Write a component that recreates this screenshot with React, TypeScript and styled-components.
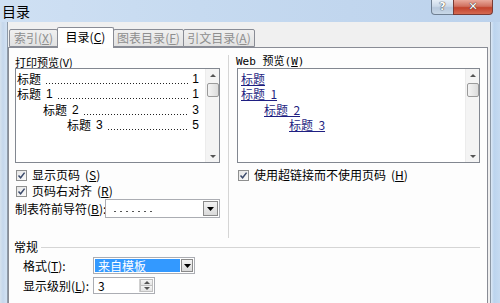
import React from 'react';
import styled, { createGlobalStyle } from 'styled-components';

const GlobalStyle = createGlobalStyle`
  html, body { margin: 0; padding: 0; }
  body {
    width: 500px; height: 303px; overflow: hidden;
    font-family: "Noto Sans CJK SC", "Liberation Sans", sans-serif;
    font-size: 12px; color: #000;
  }
  * { box-sizing: border-box; }
`;

const Window = styled.div`
  width: 500px; height: 303px;
  display: flex; flex-direction: column;
  background: #c8daee; overflow: hidden;
`;

const TitleBar = styled.div`
  height: 22px; flex: none;
  display: flex; justify-content: space-between; align-items: flex-start;
  background: linear-gradient(90deg, #cfe0f3 0%, #c6daf0 40%, #bcd2ec 100%);
`;

const Title = styled.div`
  padding: 3px 0 0 2px;
  font-size: 14px; line-height: 16px;
`;

const CapButtons = styled.div`
  display: flex; margin-right: 7px;
`;

const CapButton = styled.div<{ $close?: boolean }>`
  width: ${p => (p.$close ? 40 : 23)}px; height: 15px;
  border: 1px solid ${p => (p.$close ? '#7a3b35' : '#6f7f92')};
  border-top: none;
  border-radius: ${p => (p.$close ? '0 0 4px 0' : '0 0 0 4px')};
  margin-left: ${p => (p.$close ? -1 : 0)}px;
  background: ${p => (p.$close
    ? 'linear-gradient(180deg, #e9a99c 0%, #d0705f 45%, #c2422c 55%, #d56a52 100%)'
    : 'linear-gradient(180deg, #e6eef7 0%, #cbd9e8 45%, #b7c8dc 55%, #c9d8e8 100%)')};
  display: flex; align-items: center; justify-content: center;
  color: #fff; font-family: "DejaVu Sans", sans-serif; font-weight: bold;
  font-size: 11px; line-height: 12px;
  text-shadow: 0 0 1px #333, 0 0 1px #333;
`;

const Body = styled.div`
  flex: 1; display: flex; min-height: 0;
`;

const LeftFrame = styled.div`
  width: 8px; flex: none;
  background: linear-gradient(90deg, #d6e2ee 0px, #c5d7ec 3px, #d0e0f2 6px);
  border-right: 1px solid #8e9aa8;
`;

const RightFrame = styled.div`
  width: 10px; flex: none;
  border-left: 1px solid #8d98a5;
  background: linear-gradient(90deg, #dce8f5 0px, #bcd4ee 3px, #c7dbf1 10px);
`;

const Client = styled.div`
  flex: 1; display: flex; flex-direction: column;
  background: #f0f0f0;
  padding: 5px 2px 0 0;
`;

const TabStrip = styled.div`
  height: 20px; flex: none;
  display: flex; align-items: flex-end;
  padding-left: 1px;
  position: relative; z-index: 1;
`;

const Tab = styled.div<{ $active?: boolean; $w: number }>`
  width: ${p => p.$w}px;
  height: ${p => (p.$active ? 21 : 18)}px;
  margin-bottom: ${p => (p.$active ? -1 : 0)}px;
  margin-left: -1px;
  border: 1px solid #898c95;
  border-bottom: ${p => (p.$active ? 'none' : '1px solid #898c95')};
  border-radius: 2px 2px 0 0;
  background: ${p => (p.$active ? '#ffffff' : 'linear-gradient(180deg, #f0f0f0 0%, #e2e2e2 100%)')};
  color: ${p => (p.$active ? '#000' : '#8e8e8e')};
  display: flex; align-items: center; justify-content: center;
  font-size: 12px; line-height: 14px;
  padding-bottom: ${p => (p.$active ? 2 : 0)}px;
  white-space: nowrap;
  &:first-child { margin-left: 0; }
`;

const Panel = styled.div`
  flex: 1; background: #fdfdfd;
  border: 1px solid #898c95; border-bottom: none;
  padding: 8px 7px 0 6px;
  display: flex; flex-direction: column;
`;

const TopSection = styled.div`
  display: flex; height: 182px;
`;

const Column = styled.div<{ $w: number }>`
  width: ${p => p.$w}px; flex: none;
  display: flex; flex-direction: column;
`;

const VSeparator = styled.div`
  width: 1px; margin: -1px 8px 0 8px;
  background: #d5d5d5;
`;

const Label = styled.div<{ $mono?: boolean }>`
  height: 12px; line-height: 12px; font-size: 11px;
  font-family: ${p => (p.$mono ? '"DejaVu Sans Mono", "Noto Sans CJK SC", monospace' : 'inherit')};
  white-space: nowrap;
  margin-left: ${p => (p.$mono ? -1 : 0)}px;
`;

const ListBox = styled.div`
  height: 95px; display: flex;
  border: 1px solid #828790; background: #fff;
`;

const ListBody = styled.div`
  flex: 1; min-width: 0; padding: 2px 6px 0 1px;
  display: flex; flex-direction: column;
`;

const TocRow = styled.div<{ $indent: number }>`
  height: 15.5px; display: flex; align-items: center;
  padding-left: ${p => p.$indent}px;
  font-size: 12px; line-height: 14px; white-space: nowrap;
`;

const Leader = styled.span`
  flex: 1; min-width: 0; height: 12px; margin: 0 4px 0 4px;
  background-image: radial-gradient(circle, #222 0.7px, transparent 0.9px);
  background-size: 3px 3px;
  background-repeat: repeat-x;
  background-position: 0 9px;
`;

const PageNum = styled.span`
  font-family: "Liberation Sans", sans-serif; font-size: 12px;
`;

const Num = styled.span`
  font-family: "Liberation Sans", sans-serif; font-size: 12px; margin-left: 5px;
`;

const LinkRow = styled.div<{ $indent: number }>`
  height: 15.5px; display: flex; align-items: center;
  padding-left: ${p => p.$indent}px;
`;

const Link = styled.span`
  color: #1f1f82; text-decoration: underline; font-size: 12px; line-height: 14px; white-space: pre;
`;

const ScrollBar = styled.div`
  width: 14px; flex: none;
  background: #f4f4f4; border-left: 1px solid #ececec;
  display: flex; flex-direction: column; align-items: center;
  padding: 5px 0 4px;
`;

const Arrow = styled.div<{ $down?: boolean }>`
  width: 0; height: 0;
  border-left: 3px solid transparent; border-right: 3px solid transparent;
  ${p => (p.$down ? 'border-top: 3px solid #555;' : 'border-bottom: 3px solid #555;')}
`;

const Thumb = styled.div`
  width: 12px; height: 14px; margin-top: 6px;
  border: 1px solid #9a9a9a; border-radius: 2px;
  background: linear-gradient(90deg, #f4f4f4, #dcdcdc);
`;

const Spacer = styled.div` flex: 1; `;

const CheckRow = styled.div<{ $top?: number }>`
  height: 16px; display: flex; align-items: center; gap: 5px;
  margin-top: ${p => p.$top ?? 0}px; padding-left: 1px;
  font-size: 12px; line-height: 14px; white-space: nowrap;
`;

const CheckBox = styled.div`
  width: 11px; height: 11px; flex: none;
  border: 1px solid #8e8f8f;
  background: linear-gradient(135deg, #e6e6e6, #fafafa);
  display: flex; align-items: center; justify-content: center;
`;

const FieldRow = styled.div<{ $top?: number; $pad?: number }>`
  display: flex; align-items: center;
  margin-top: ${p => p.$top ?? 0}px;
  padding-left: ${p => p.$pad ?? 0}px;
  font-size: 12px; line-height: 14px; white-space: nowrap;
`;

const FieldLabel = styled.div<{ $w: number }>`
  width: ${p => p.$w}px; flex: none;
`;

const Combo = styled.div<{ $w: number; $h: number }>`
  width: ${p => p.$w}px; height: ${p => p.$h}px;
  border: 1px solid #abadb3; background: #fff;
  display: flex; align-items: stretch; padding: 1px;
`;

const ComboText = styled.div<{ $sel?: boolean }>`
  flex: 1; min-width: 0; display: flex; align-items: center;
  padding-left: 3px;
  background: ${p => (p.$sel ? '#3399ff' : 'transparent')};
  color: ${p => (p.$sel ? '#fff' : '#000')};
  margin-right: 1px; font-size: 12px; line-height: 13px;
`;

const LeaderSample = styled.div`
  width: 42px; height: 10px; margin-left: 2px;
  background-image: radial-gradient(circle, #555 0.6px, transparent 0.8px);
  background-size: 6px 3px;
  background-repeat: repeat-x;
  background-position: 0 6px;
`;

const DropButton = styled.div<{ $w: number }>`
  width: ${p => p.$w}px; flex: none;
  border: 1px solid #8a8a8a;
  background: linear-gradient(180deg, #f3f3f3, #dadada);
  display: flex; align-items: center; justify-content: center;
`;

const SpinButtons = styled.div`
  width: 14px; flex: none;
  display: flex; flex-direction: column;
  border-left: 1px solid #d0d0d0;
`;

const SpinHalf = styled.div`
  flex: 1; display: flex; align-items: center; justify-content: center;
  background: linear-gradient(180deg, #f5f5f5, #e4e4e4);
  border: 1px solid #c0c0c0;
  & + & { border-top: none; }
`;

const GroupHeader = styled.div`
  display: flex; align-items: center; height: 14px;
  margin-top: 2px; margin-left: -1px;
  font-size: 12px; line-height: 14px;
`;

const GroupLine = styled.div`
  flex: 1; height: 1px; background: #d5d5d5; margin-left: 3px;
`;

const Mn: React.FC<{ k: string }> = ({ k }) => (
  <span>(<u>{k}</u>)</span>
);

const Check = () => (
  <CheckBox>
    <svg width="9" height="9" viewBox="0 0 9 9">
      <path d="M1.5 4.5 L3.6 6.8 L7.6 1.6" fill="none" stroke="#3b4a6b" strokeWidth="1.5" />
    </svg>
  </CheckBox>
);

const TriDown = () => (
  <svg width="7" height="4" viewBox="0 0 7 4"><path d="M0 0 H7 L3.5 4 Z" fill="#000" /></svg>
);

const tocRows = [
  { name: '标题', num: '', indent: 0, page: '1' },
  { name: '标题', num: '1', indent: 0, page: '1' },
  { name: '标题', num: '2', indent: 26, page: '3' },
  { name: '标题', num: '3', indent: 50, page: '5' },
];
const linkRows = [
  { text: '标题', indent: 2 },
  { text: '标题  1', indent: 2 },
  { text: '标题  2', indent: 25 },
  { text: '标题  3', indent: 50 },
];

export default function App() {
  return (
    <>
      <GlobalStyle />
      <Window>
        <TitleBar>
          <Title>目录</Title>
          <CapButtons>
            <CapButton>?</CapButton>
            <CapButton $close>✕</CapButton>
          </CapButtons>
        </TitleBar>
        <Body>
          <LeftFrame />
          <Client>
            <TabStrip>
              <Tab $w={49}>索引<Mn k="X" /></Tab>
              <Tab $w={57} $active>目录<Mn k="C" /></Tab>
              <Tab $w={71}>图表目录<Mn k="F" /></Tab>
              <Tab $w={72}>引文目录<Mn k="A" /></Tab>
            </TabStrip>
            <Panel>
              <TopSection>
                <Column $w={205}>
                  <Label>打印预览<Mn k="V" /></Label>
                  <ListBox>
                    <ListBody>
                      {tocRows.map((r, i) => (
                        <TocRow key={i} $indent={r.indent}>
                          <span>{r.name}</span>
                          {r.num ? <Num>{r.num}</Num> : null}
                          <Leader />
                          <PageNum>{r.page}</PageNum>
                        </TocRow>
                      ))}
                    </ListBody>
                    <ScrollBar>
                      <Arrow />
                      <Thumb />
                      <Spacer />
                      <Arrow $down />
                    </ScrollBar>
                  </ListBox>
                  <CheckRow $top={4}><Check />显示页码<Mn k="S" /></CheckRow>
                  <CheckRow><Check />页码右对齐<Mn k="R" /></CheckRow>
                  <FieldRow $top={0}>
                    <FieldLabel $w={90}>制表符前导符<Mn k="B" />:</FieldLabel>
                    <Combo $w={115} $h={19}>
                      <ComboText><LeaderSample /></ComboText>
                      <DropButton $w={15}><TriDown /></DropButton>
                    </Combo>
                  </FieldRow>
                </Column>
                <VSeparator />
                <Column $w={243}>
                  <Label $mono>Web 预览<Mn k="W" /></Label>
                  <ListBox>
                    <ListBody>
                      {linkRows.map((r, i) => (
                        <LinkRow key={i} $indent={r.indent}>
                          <Link>{r.text}</Link>
                        </LinkRow>
                      ))}
                    </ListBody>
                    <ScrollBar>
                      <Arrow />
                      <Thumb />
                      <Spacer />
                      <Arrow $down />
                    </ScrollBar>
                  </ListBox>
                  <CheckRow $top={4}><Check />使用超链接而不使用页码<Mn k="H" /></CheckRow>
                </Column>
              </TopSection>
              <GroupHeader>常规<GroupLine /></GroupHeader>
              <FieldRow $top={3} $pad={8}>
                <FieldLabel $w={70}>格式<Mn k="T" />:</FieldLabel>
                <Combo $w={102} $h={17}>
                  <ComboText $sel>来自模板</ComboText>
                  <DropButton $w={12}><TriDown /></DropButton>
                </Combo>
              </FieldRow>
              <FieldRow $top={3} $pad={8}>
                <FieldLabel $w={70}>显示级别<Mn k="L" />:</FieldLabel>
                <Combo $w={62} $h={17}>
                  <ComboText>3</ComboText>
                  <SpinButtons>
                    <SpinHalf><Arrow /></SpinHalf>
                    <SpinHalf><Arrow $down /></SpinHalf>
                  </SpinButtons>
                </Combo>
              </FieldRow>
            </Panel>
          </Client>
          <RightFrame />
        </Body>
      </Window>
    </>
  );
}
